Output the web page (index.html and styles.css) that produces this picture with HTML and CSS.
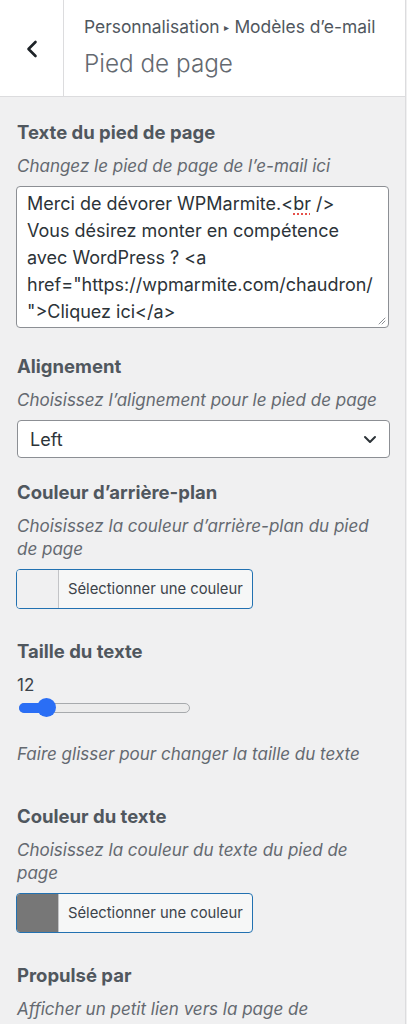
FILE: index.html
```html
<!DOCTYPE html>
<html lang="fr">
<head>
<meta charset="utf-8">
<title>Pied de page</title>
<link rel="stylesheet" href="styles.css">
</head>
<body>
<div class="panel">
  <header class="head">
    <div class="back">
      <svg width="14" height="18" viewBox="0 0 14 18"><path d="M10.5 2 L3.5 9 L10.5 16" fill="none" stroke="#1d2327" stroke-width="2.6" stroke-linecap="round" stroke-linejoin="round"/></svg>
    </div>
    <div class="titles">
      <div class="crumb">Personnalisation <span class="tri">▸</span> Modèles d’e-mail</div>
      <div class="title">Pied de page</div>
    </div>
  </header>
  <main class="content">
    <section class="ctrl ctrl-ta">
      <h3 class="label">Texte du pied de page</h3>
      <p class="desc">Changez le pied de page de l’e-mail ici</p>
      <div class="textarea">Merci de dévorer WPMarmite.&lt;<span class="spell">br</span> /&gt;<br>Vous désirez monter en compétence avec WordPress ? &lt;a href="https://wpmarmite.com/chaudron/<br>"&gt;Cliquez ici&lt;/a&gt;
        <svg class="grip" width="9" height="9" viewBox="0 0 9 9"><path d="M8 2 L2 8 M8 5 L5 8" stroke="#8c8f94" stroke-width="1" fill="none" stroke-linecap="round"/></svg>
      </div>
    </section>
    <section class="ctrl">
      <h3 class="label">Alignement</h3>
      <p class="desc">Choisissez l’alignement pour le pied de page</p>
      <div class="select"><span>Left</span>
        <svg width="14" height="9" viewBox="0 0 14 9"><path d="M2 2 L7 7 L12 2" fill="none" stroke="#2c3338" stroke-width="2" stroke-linecap="round" stroke-linejoin="round"/></svg>
      </div>
    </section>
    <section class="ctrl ctrl-color">
      <h3 class="label">Couleur d’arrière-plan</h3>
      <p class="desc">Choisissez la couleur d’arrière-plan du pied de page</p>
      <div class="color"><span class="swatch light"></span><span class="ctext">Sélectionner une couleur</span></div>
    </section>
    <section class="ctrl ctrl-range">
      <h3 class="label">Taille du texte</h3>
      <div class="value">12</div>
      <div class="range"><div class="fill"></div><div class="thumb"></div></div>
      <p class="desc desc-after">Faire glisser pour changer la taille du texte</p>
    </section>
    <section class="ctrl ctrl-color">
      <h3 class="label">Couleur du texte</h3>
      <p class="desc">Choisissez la couleur du texte du pied de page</p>
      <div class="color"><span class="swatch dark"></span><span class="ctext">Sélectionner une couleur</span></div>
    </section>
    <section class="ctrl">
      <h3 class="label">Propulsé par</h3>
      <p class="desc">Afficher un petit lien vers la page de</p>
    </section>
  </main>
</div>
</body>
</html>
```
FILE: styles.css
```css
html, body {
  margin: 0;
  padding: 0;
  background: #f0f0f1;
}
body {
  font-family: Inter, "Liberation Sans", Arial, sans-serif;
  color: #50575e;
  width: 407px;
  height: 1024px;
  overflow: hidden;
}
.panel {
  width: 405px;
  min-height: 1024px;
  border-right: 1px solid #dcdcde;
  background: #f0f0f1;
}
.head {
  display: flex;
  height: 96px;
  background: #fff;
  border-bottom: 1px solid #dcdcde;
}
.back {
  width: 63px;
  border-right: 1px solid #dcdcde;
  display: flex;
  align-items: center;
  justify-content: center;
}
.back svg {
  margin-top: 2px;
}
.titles {
  padding-left: 20px;
  padding-top: 16px;
}
.crumb {
  font-size: 17.4px;
  line-height: 22px;
  color: #50575e;
}
.tri {
  font-size: 10px;
  position: relative;
  top: -2px;
}
.title {
  font-weight: 300;
  font-size: 24.3px;
  line-height: 34px;
  margin-top: 6px;
  color: #646970;
}
.content {
  padding: 22px 16px 0 17px;
}
.ctrl {
  margin-bottom: 21px;
}
.ctrl-ta {
  margin-bottom: 25px;
}
.ctrl-color {
  margin-bottom: 29px;
}
.label {
  margin: 0;
  font-size: 18.5px;
  line-height: 26px;
  font-weight: 700;
  color: #50575e;
}
.desc {
  margin: 10px 0 8px;
  font-size: 17px;
  line-height: 23px;
  font-style: italic;
  color: #646970;
}
.textarea {
  position: relative;
  box-sizing: border-box;
  width: 373px;
  height: 142px;
  margin-left: -1px;
  background: #fff;
  border: 1px solid #8c8f94;
  border-radius: 4px;
  padding: 3px 10px;
  font-size: 18px;
  line-height: 27px;
  color: #2c3338;
}
.spell {
  text-decoration: underline dotted #e6504a;
  text-decoration-thickness: 2px;
  text-underline-offset: 3px;
}
.grip {
  position: absolute;
  right: 2px;
  bottom: 2px;
}
.select {
  box-sizing: border-box;
  width: 373px;
  height: 38px;
  display: flex;
  align-items: center;
  justify-content: space-between;
  padding: 0 12px 0 12px;
  background: #fff;
  border: 1px solid #8c8f94;
  border-radius: 4px;
  font-size: 18px;
  color: #2c3338;
}
.color {
  box-sizing: border-box;
  display: flex;
  width: 237px;
  height: 40px;
  margin-left: -1px;
  border: 1px solid #2271b1;
  border-radius: 4px;
  background: #f6f7f7;
  overflow: hidden;
}
.swatch {
  width: 41px;
  border-right: 1px solid #c3c4c7;
}
.swatch.light { background: #f0f0f1; }
.swatch.dark { background: #777777; }
.ctext {
  display: flex;
  align-items: center;
  padding-left: 9px;
  font-size: 14.8px;
  color: #3c434a;
}
.ctrl-range {
  margin-top: 28px;
  margin-bottom: 37px;
}
.value {
  margin-top: 10px;
  font-size: 17px;
  line-height: 22px;
  color: #3c434a;
}
.range {
  position: relative;
  margin: 7px 0 0 2px;
  width: 171px;
  height: 10px;
  box-sizing: border-box;
  border: 1px solid #a7aaad;
  border-radius: 5px;
  background: #ececec;
}
.fill {
  position: absolute;
  left: -1px;
  top: -1px;
  width: 28px;
  height: 10px;
  border-radius: 5px;
  background: #2a6ef5;
}
.thumb {
  position: absolute;
  left: 17px;
  top: -6px;
  width: 19px;
  height: 19px;
  border-radius: 50%;
  background: #2a6ef5;
}
.desc-after {
  margin-top: 30px;
}
```
